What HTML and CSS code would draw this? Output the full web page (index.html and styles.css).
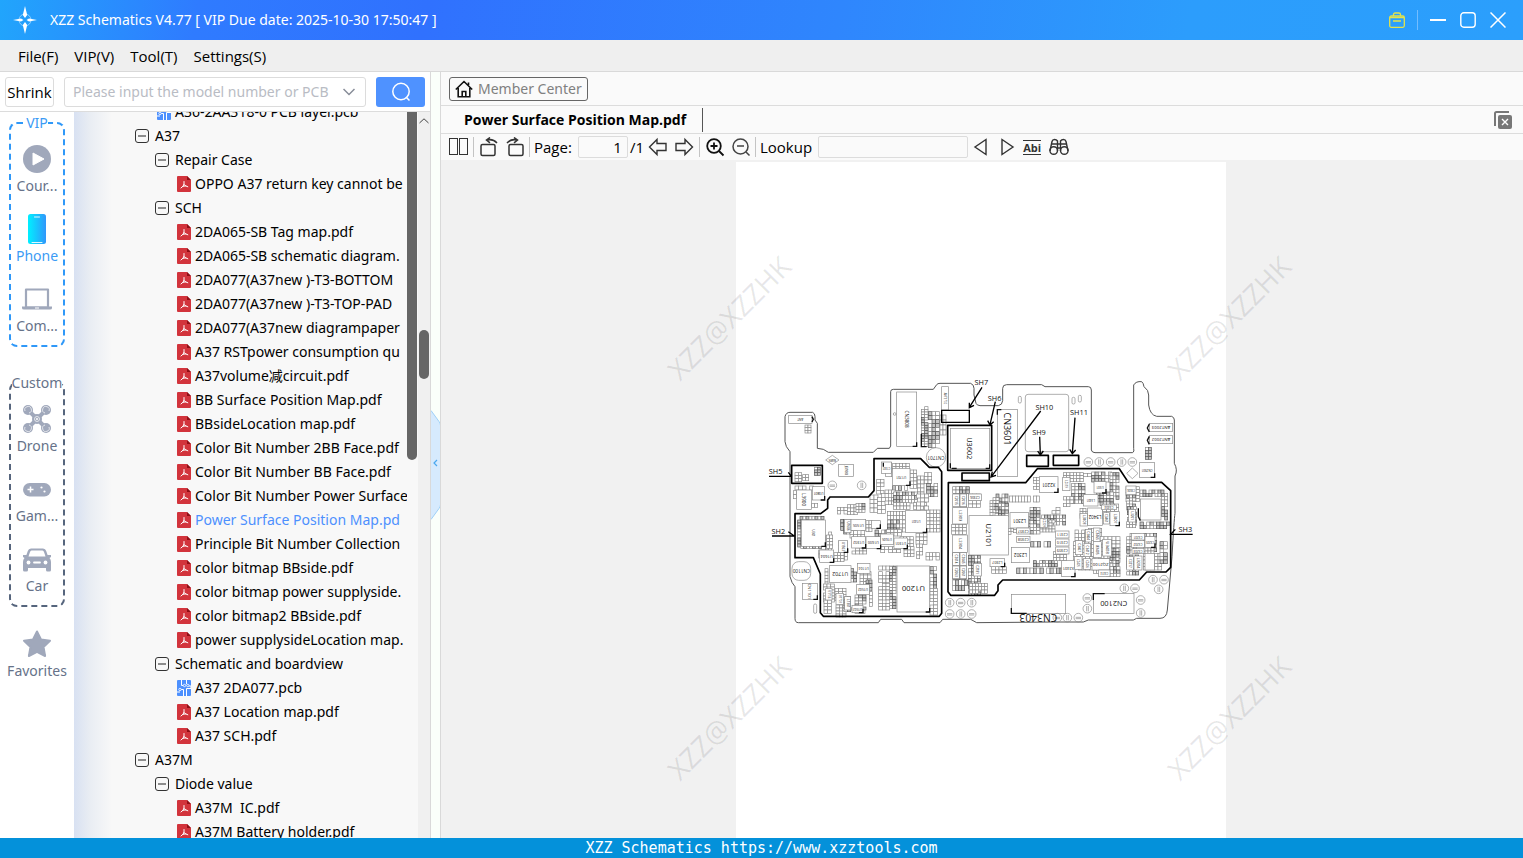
FILE: index.html
```html
<!DOCTYPE html>
<html lang="en">
<head>
<meta charset="utf-8">
<title>XZZ Schematics V4.77</title>
<link rel="stylesheet" href="styles.css">
</head>
<body>
<svg class="defs" aria-hidden="true">
  <symbol id="pdf" viewBox="0 0 14 16">
    <path d="M1 0h9l4 4v11a1 1 0 0 1-1 1H1a1 1 0 0 1-1-1V1a1 1 0 0 1 1-1z" fill="#d2343c"/>
    <path d="M10 0l4 4h-4z" fill="#8f0f16"/>
    <path d="M7 5.500v2.500Q7 10 4 12M7 8.500q.5 1.500 3.800 2.300M5.800 10.400l3-.6" fill="none" stroke="#fff" stroke-linecap="round"/>
  </symbol>
  <symbol id="pcb" viewBox="0 0 14 16">
    <rect width="14" height="16" rx="1" fill="#4d90fe"/>
    <path d="M4.500 0v5.500h2M6.500 16V9.500h-3M9.500 0v4M9.500 16V8.500h4.500V6h-2.500M0 12h3" fill="none" stroke="#fff"/>
    <circle cx="7.500" cy="5.500" r="1.200" fill="#4d90fe" stroke="#fff" stroke-width=".8"/><circle cx="3" cy="9.500" r="1.200" fill="#4d90fe" stroke="#fff" stroke-width=".8"/><circle cx="10.800" cy="5.500" r="1.200" fill="#4d90fe" stroke="#fff" stroke-width=".8"/>
  </symbol>
  <symbol id="minus" viewBox="0 0 14 14">
    <rect x=".5" y=".5" width="13" height="13" rx="2.500" fill="none" stroke="#333"/><path d="M3 7h8" stroke="#222"/>
  </symbol>
</svg>

<header class="titlebar">
  <svg class="logo" viewBox="0 0 24 28"><g fill="none" stroke="#8fd0ff"><circle cx="12" cy="14" r="6"/></g><path d="M12 0l2.200 9L12 12 9.800 9zM12 28l2.200-9L12 16l-2.200 3zM0 14l8-1.600L10.500 14 8 15.600zM24 14l-8-1.600L13.500 14l2.500 1.600z" fill="#fff"/></svg>
  <h1>XZZ Schematics V4.77 [ VIP Due date: 2025-10-30 17:50:47 ]</h1>
  <div class="window-tools">
    <button aria-label="Toolbox"><svg viewBox="0 0 16 16" fill="none" stroke="#e3e34b" stroke-width="1.300"><rect x=".7" y="4" width="14.600" height="11.300" rx="1.500"/><path d="M4.500 4V2.500a1.500 1.500 0 0 1 1.500-1.500h4a1.500 1.500 0 0 1 1.500 1.500V4M1 5.500h14M4 9h8"/></svg></button>
    <span class="rule"></span>
    <button aria-label="Minimize"><svg viewBox="0 0 16 16" stroke="#fff" stroke-width="2"><path d="M0 8h16"/></svg></button>
    <button aria-label="Maximize"><svg viewBox="0 0 16 16" fill="none" stroke="#fff" stroke-width="1.400"><rect x=".8" y=".8" width="14.400" height="14.400" rx="3"/></svg></button>
    <button aria-label="Close"><svg viewBox="0 0 16 16" stroke="#fff" stroke-width="1.500"><path d="M.5.5l15 15M15.500.5l-15 15"/></svg></button>
  </div>
</header>

<nav class="menubar">
  <button>File(F)</button><button>VIP(V)</button><button>Tool(T)</button><button>Settings(S)</button>
</nav>

<main class="workspace">
  <section class="browser">
    <form class="search">
      <button type="button" class="shrink">Shrink</button>
      <div class="model">
        <input type="text" aria-label="Model number" placeholder="Please input the model number or PCB">
        <svg viewBox="0 0 12 8" fill="none" stroke="#888d99" stroke-width="1.500"><path d="M.5 1l5.500 5.500L11.500 1"/></svg>
      </div>
      <button type="button" class="go" aria-label="Search"><svg viewBox="0 0 20 20" fill="none" stroke="#fff" stroke-width="1.500"><circle cx="10" cy="9.500" r="8.200"/><path d="M15 15l3.500 3.500"/></svg></button>
    </form>
    <div class="library">
      <aside class="categories">
        <fieldset class="group vip">
          <legend>VIP</legend>
          <button class="cat"><svg viewBox="0 0 30 30"><circle cx="15" cy="15" r="14" fill="#a0a8bb"/><path d="M11 9v12l11-6z" fill="#fff" stroke="#fff" stroke-linejoin="round"/></svg>Cour...</button>
          <button class="cat current"><svg viewBox="0 0 30 30"><defs><linearGradient id="phone"><stop stop-color="#00f0ff"/><stop offset="1" stop-color="#3097fb"/></linearGradient></defs><rect x="6" y="0" width="18" height="30" rx="2.500" fill="url(#phone)"/><path d="M12.500 3h5M10 28.500h10" stroke="#dff8ff" stroke-linecap="round"/></svg>Phone</button>
          <button class="cat"><svg viewBox="0 0 30 30"><path d="M4 5.500h22v18H4z" fill="none" stroke="#a0a8bb" stroke-width="2.200" stroke-linejoin="round"/><path d="M0 22.500h30v1.500q0 1.500-2 1.500H2q-2 0-2-1.500z" fill="#a0a8bb"/><path d="M13 24h4" stroke="#fff"/></svg>Com...</button>
        </fieldset>
        <fieldset class="group custom">
          <legend>Custom</legend>
          <button class="cat"><svg viewBox="0 0 30 30"><path d="M6 6l9 9 9-9M6 24l9-9 9 9" fill="none" stroke="#a0a8bb" stroke-width="4"/><g fill="#a0a8bb"><circle cx="6" cy="6" r="5"/><circle cx="24" cy="6" r="5"/><circle cx="6" cy="24" r="5"/><circle cx="24" cy="24" r="5"/><circle cx="15" cy="15" r="5"/></g><g fill="none" stroke="#fff" stroke-width=".7"><path d="M3 7a3.300 3.300 0 1 1 4 2M27 7a3.300 3.300 0 1 0-4 2M3 23a3.300 3.300 0 1 0 4-2M27 23a3.300 3.300 0 1 1-4-2"/><circle cx="15" cy="15" r="2.500"/></g><circle cx="15" cy="15" r="1" fill="#fff"/></svg>Drone</button>
          <button class="cat"><svg viewBox="0 0 30 30"><rect x="1" y="9" width="28" height="13.500" rx="6.700" fill="#a0a8bb"/><path d="M8.500 12.500v6M5.500 15.500h6" stroke="#fff" stroke-width="1.500"/><circle cx="19.500" cy="13.500" r="1.100" fill="#fff"/><circle cx="22.500" cy="17.500" r="1.100" fill="#fff"/></svg>Gam...</button>
          <button class="cat"><svg viewBox="0 0 30 30"><path d="M9 4.500h12q2.500 0 3.200 2.500l1.400 4 3.400 0v2l-1.500 1q1.500 1.500 1.500 4V26q0 1.500-1.500 1.500h-2q-1.500 0-1.500-1.500v-2H6v2q0 1.500-1.500 1.500h-2Q1 27.500 1 26v-8q0-2.500 1.500-4L1 13v-2h3.400l1.400-4Q6.500 4.500 9 4.500z" fill="#a0a8bb"/><path d="M9.500 6.500h11q1 0 1.500 1.500l1.500 4.500h-17L8 8q.5-1.500 1.500-1.500z" fill="#fff"/><circle cx="6.500" cy="18.500" r="1.900" fill="#fff"/><circle cx="23.500" cy="18.500" r="1.900" fill="#fff"/><path d="M12 18.500h6" stroke="#fff" stroke-width="1.800" stroke-linecap="round"/></svg>Car</button>
        </fieldset>
        <button class="cat favorites"><svg viewBox="0 0 30 30"><path d="M15 2.500l4 8 9 1.300-6.500 6.200 1.600 9L15 22.800 6.900 27l1.600-9L2 11.800l9-1.300z" fill="#a0a8bb" stroke="#a0a8bb" stroke-width="2" stroke-linejoin="round"/></svg>Favorites</button>
      </aside>
      <div class="tree-pane">
        <ul class="tree">
          <li class="l2 leaf"><svg><use href="#pcb"/></svg>A36-2AA318-0 PCB layer.pcb</li>
          <li class="l1"><svg><use href="#minus"/></svg>A37</li>
          <li class="l2"><svg><use href="#minus"/></svg>Repair Case</li>
          <li class="l3 leaf"><svg><use href="#pdf"/></svg>OPPO A37 return key cannot be</li>
          <li class="l2"><svg><use href="#minus"/></svg>SCH</li>
          <li class="l3 leaf"><svg><use href="#pdf"/></svg>2DA065-SB Tag map.pdf</li>
          <li class="l3 leaf"><svg><use href="#pdf"/></svg>2DA065-SB schematic diagram.</li>
          <li class="l3 leaf"><svg><use href="#pdf"/></svg>2DA077(A37new )-T3-BOTTOM</li>
          <li class="l3 leaf"><svg><use href="#pdf"/></svg>2DA077(A37new )-T3-TOP-PAD</li>
          <li class="l3 leaf"><svg><use href="#pdf"/></svg>2DA077(A37new diagrampaper</li>
          <li class="l3 leaf"><svg><use href="#pdf"/></svg>A37 RSTpower consumption qu</li>
          <li class="l3 leaf"><svg><use href="#pdf"/></svg>A37volume减circuit.pdf</li>
          <li class="l3 leaf"><svg><use href="#pdf"/></svg>BB Surface Position Map.pdf</li>
          <li class="l3 leaf"><svg><use href="#pdf"/></svg>BBsideLocation map.pdf</li>
          <li class="l3 leaf"><svg><use href="#pdf"/></svg>Color Bit Number 2BB Face.pdf</li>
          <li class="l3 leaf"><svg><use href="#pdf"/></svg>Color Bit Number BB Face.pdf</li>
          <li class="l3 leaf"><svg><use href="#pdf"/></svg>Color Bit Number Power Surface</li>
          <li class="l3 leaf selected"><svg><use href="#pdf"/></svg>Power Surface Position Map.pd</li>
          <li class="l3 leaf"><svg><use href="#pdf"/></svg>Principle Bit Number Collection</li>
          <li class="l3 leaf"><svg><use href="#pdf"/></svg>color bitmap BBside.pdf</li>
          <li class="l3 leaf"><svg><use href="#pdf"/></svg>color bitmap power supplyside.</li>
          <li class="l3 leaf"><svg><use href="#pdf"/></svg>color bitmap2 BBside.pdf</li>
          <li class="l3 leaf"><svg><use href="#pdf"/></svg>power supplysideLocation map.</li>
          <li class="l2"><svg><use href="#minus"/></svg>Schematic and boardview</li>
          <li class="l3 leaf"><svg><use href="#pcb"/></svg>A37 2DA077.pcb</li>
          <li class="l3 leaf"><svg><use href="#pdf"/></svg>A37 Location map.pdf</li>
          <li class="l3 leaf"><svg><use href="#pdf"/></svg>A37 SCH.pdf</li>
          <li class="l1"><svg><use href="#minus"/></svg>A37M</li>
          <li class="l2"><svg><use href="#minus"/></svg>Diode value</li>
          <li class="l3 leaf"><svg><use href="#pdf"/></svg>A37M&nbsp; IC.pdf</li>
          <li class="l3 leaf"><svg><use href="#pdf"/></svg>A37M Battery holder.pdf</li>
        </ul>
        <div class="inner-scroll"><span></span></div>
        <div class="outer-scroll"><svg viewBox="0 0 10 6" fill="none" stroke="#444"><path d="M.5 5L5 .8 9.500 5"/></svg><span></span></div>
      </div>
    </div>
  </section>

  <div class="splitter"><button aria-label="Collapse panel"><svg viewBox="0 0 10 110"><path d="M0 .5l8 11q1.500 2 1.500 4v79q0 2-1.500 4l-8 11" fill="#d6eafd" stroke="#9fd0f7"/><path d="M6 50L3 53l3 3" fill="none" stroke="#4aa8ef" stroke-width="1.200"/></svg></button></div>

  <section class="document">
    <div class="memberbar">
      <button><svg viewBox="0 0 18 18" fill="none" stroke="#111" stroke-width="1.600"><path d="M.8 9.500L9 1.500l8.200 8M3.200 8v8.700h11.600V8M7.200 16.500v-5h3.600v5M13.500 5V2.500"/></svg>Member Center</button>
    </div>
    <div class="tabs">
      <button class="tab">Power Surface Position Map.pdf</button>
      <button class="close-all" aria-label="Close all tabs"><svg viewBox="0 0 18 18"><path d="M1 15V2.500Q1 1 2.500 1H15" fill="none" stroke="#777" stroke-width="2"/><rect x="4" y="4" width="14" height="14" rx="2" fill="#777"/><path d="M8 8l6 6M14 8l-6 6" stroke="#fff" stroke-width="1.400"/></svg></button>
    </div>
    <div class="toolbar">
      <button aria-label="Two pages"><svg viewBox="0 0 20 20" fill="none" stroke="#333"><rect x="1.500" y="1.500" width="8" height="16"/><rect x="11.500" y="1.500" width="8" height="16"/></svg></button>
      <span class="sep"></span>
      <button aria-label="Rotate left"><svg viewBox="0 0 20 20" fill="none" stroke="#333" stroke-width="1.500"><rect x="2" y="7.500" width="14" height="11" rx="1.500"/><path d="M18 6Q14 1.500 8 3M11 .5L7.500 3l3.500 2.800"/></svg></button>
      <button class="after" aria-label="Rotate right"><svg viewBox="0 0 20 20" fill="none" stroke="#333" stroke-width="1.500"><rect x="4" y="7.500" width="14" height="11" rx="1.500"/><path d="M2 6Q6 1.500 12 3M9 .5L12.500 3 9 5.800"/></svg></button>
      <span class="sep tight"></span>
      <label for="page">Page:</label>
      <input id="page" class="page-no" type="text" value="1">
      <span class="total">/1</span>
      <button aria-label="Previous page"><svg viewBox="0 0 20 20" fill="none" stroke="#333" stroke-width="1.400"><path d="M1.500 10L9 2.500V6.500h9v7H9v4z"/></svg></button>
      <button class="after" aria-label="Next page"><svg viewBox="0 0 20 20" fill="none" stroke="#333" stroke-width="1.400"><path d="M18.500 10L11 2.500V6.500H2v7h9v4z"/></svg></button>
      <span class="sep"></span>
      <button aria-label="Zoom in"><svg viewBox="0 0 20 20" fill="none" stroke="#111" stroke-width="1.800"><circle cx="9" cy="9" r="6.800"/><path d="M14 14l4.500 4.500M9 5.500v7M5.500 9h7"/></svg></button>
      <button class="after" aria-label="Zoom out"><svg viewBox="0 0 20 20" fill="none" stroke="#444" stroke-width="1.500"><circle cx="9.500" cy="9.500" r="7.500"/><path d="M15 15l3.500 3.500M6 9h7"/></svg></button>
      <span class="sep tight"></span>
      <label for="lookup">Lookup</label>
      <input id="lookup" class="lookup" type="text">
      <button aria-label="Find previous"><svg viewBox="0 0 20 20" fill="none" stroke="#333" stroke-width="1.400"><path d="M15 2.500v15L4 10z"/></svg></button>
      <button class="after" aria-label="Find next"><svg viewBox="0 0 20 20" fill="none" stroke="#333" stroke-width="1.400"><path d="M5 2.500v15L16 10z"/></svg></button>
      <button class="abi after">Abi</button>
      <button class="after" aria-label="Find in files"><svg viewBox="0 0 20 20" fill="none" stroke="#333" stroke-width="1.400"><path d="M1 14L3 4.500Q3.500 2.500 5.500 2.500T8.500 4v10M19 14l-2-9.500Q16.500 2.500 14.500 2.500T11.500 4v10M8.500 7h3M8.500 11h3"/><circle cx="4.700" cy="13.500" r="3.800"/><circle cx="15.300" cy="13.500" r="3.800"/><path d="M2.500 7h6M11.500 7h6"/></svg></button>
    </div>
    <div class="viewer">
      <svg class="sheet" id="sheet" viewBox="-72 -624 1470 2028" preserveAspectRatio="xMidYMin slice">
        <g class="outline">
          <path d="M75 140Q78 127 90 127H158Q165 130 165 140V150L172 160V235L190 238L205 247H340L352 235H388L392 228V65Q392 58 400 58H520L530 44Q533 40 540 40H632Q642 44 642 55V75L648 100Q650 106 660 107H715Q727 105 728 92V55Q728 44 740 44H845L855 50H985Q994 50 994 60V240Q996 248 1005 248H1118Q1124 244 1121 236V45Q1128 33 1145 35Q1150 38 1152 50Q1166 60 1166 75V105Q1170 135 1190 139H1235Q1243 142 1243 150V280Q1254 300 1245 318V430Q1242 450 1236 560L1222 720Q1220 745 1200 745H1130L1120 750H985L970 756H880L650 758L632 748H548L540 758H432L425 748H362L355 758H115Q105 758 105 745V650Q95 640 90 620V245Q76 230 75 215Z"/>
        </g>
        <g class="shield">
          <path d="M342 266H482L508 292H535L545 305V730L538 739H190L181 728V612L160 563H105V431H182L203 415V390L210 381H325L342 362Z"/>
          <path d="M565 338H797L832 296H1078L1105 337H1205L1232 362V592L1218 606H1160L1138 630H728L714 645V662L704 676H572L564 665Z"/>
          <path d="M563 166H695V301H563ZM606 309H688V332H606ZM95 286H187V340H95ZM800 256H865V289H800ZM880 256H956V286H880Z"/>
        </g>
        <g class="leader">
          <path d="M545 121H628V157H545ZM27 319H94M85 307L95 320M36 498H104M85 485L104 499M666 52L628 112M628 98V113L642 106M706 95L690 164M683 152L690 165L701 155M842 123L694 320M697 305L693 321L708 316M839 200L841 254M833 243L841 255L850 243M945 143L937 250M929 238L937 251L947 240M1298 493H1232L1246 478"/>
        </g>
      </svg>
      <svg class="watermark" aria-hidden="true">
        <text transform="translate(239 222) rotate(-45)">XZZ@XZZHK</text>
        <text transform="translate(739 222) rotate(-45)">XZZ@XZZHK</text>
        <text transform="translate(239 622) rotate(-45)">XZZ@XZZHK</text>
        <text transform="translate(739 622) rotate(-45)">XZZ@XZZHK</text>
      </svg>
    </div>
  </section>
</main>
<footer class="statusbar">XZZ Schematics https://www.xzztools.com</footer>
<script src="board.js"></script>
</body>
</html>
```
FILE: styles.css
```css
* { box-sizing: border-box; }
body {
  margin: 0;
  height: 100vh;
  display: flex;
  flex-direction: column;
  overflow: hidden;
  font: 14px/20px "Noto Sans", "Noto Sans CJK SC", sans-serif;
  color: #000;
  background: #f0f0f0;
}
button, input { font: inherit; color: inherit; }
button { padding: 0; border: 0; background: none; white-space: nowrap; }
svg { display: block; flex: none; }
.defs { position: absolute; width: 0; height: 0; }

.titlebar {
  display: flex;
  align-items: center;
  height: 40px;
  padding: 0 17px 0 13px;
  flex: none;
  color: #fff;
  background: linear-gradient(100deg, #21a5fc 0, #2f7bff 13%, #3071fe 28%, #2f86fd 55%, #2c9dfc 78%, #2b9ffc 100%);
}
.logo { width: 24px; height: 28px; }
.titlebar h1 { margin: 0 auto 0 13px; font-size: 14px; font-weight: 400; }
.window-tools { display: flex; align-items: center; gap: 14px; }
.window-tools svg { width: 16px; height: 16px; }
.rule { width: 1px; height: 20px; margin: 0 -2px; background: #73bdff; }

.menubar {
  display: flex;
  flex: none;
  gap: 16px;
  height: 32px;
  padding: 0 18px;
  border-bottom: 1px solid #d9d9d9;
  background: #efefef;
}
.menubar, .shrink, .toolbar { font-family: "Open Sans", sans-serif; font-size: 15px; }

.workspace { display: flex; flex: 1; min-height: 0; }
.browser { display: flex; flex-direction: column; width: 431px; flex: none; border-right: 1px solid #d9d9d9; background: #fff; }
.search { display: flex; align-items: center; flex: none; height: 40px; padding: 0 5px; border-bottom: 1px solid #dcdcdc; }
.shrink { width: 49px; height: 30px; border: 1px solid #dcdcdc; border-radius: 3px; background: #fff; }
.model { display: flex; align-items: center; flex: 1; height: 30px; margin: 0 10px; padding: 0 10px 0 8px; border: 1px solid #dcdcdc; border-radius: 3px; }
.model input { flex: 1; min-width: 0; padding: 0; border: 0; outline: 0; background: none; }
.model input::placeholder { color: #b9bcc4; }
.model svg { width: 12px; height: 8px; margin-left: 4px; }
.go { display: grid; place-items: center; width: 49px; height: 30px; border-radius: 3px; background: #4f92ff; }
.go svg { width: 20px; height: 20px; }

.library { display: flex; flex: 1; min-height: 0; }
.categories { display: flex; flex-direction: column; align-items: center; width: 74px; flex: none; overflow: hidden; padding-top: 1px; color: #667289; }
.group { width: 56px; min-width: 0; margin: 0 0 26px; padding: 0 0 2px; border: 2px dashed #56657d; border-radius: 8px; }
.group legend { margin: 0 auto; padding: 0; line-height: 20px; }
.group.vip { border-color: #2f98f8; }
.vip legend { color: #3b9bf5; }
.cat { display: flex; flex-direction: column; align-items: center; gap: 2px; width: 100%; height: 70px; padding-top: 11px; line-height: 20px; }
.cat svg { width: 30px; height: 30px; }
.cat.current { color: #3b9bf5; }
.favorites { margin-top: -15px; }

.tree-pane { display: flex; flex: 1; min-width: 0; background: linear-gradient(90deg, #d8e1f2 0, #e9edf3 16px, #f8f8f8 38px); }
.tree { flex: 1; min-width: 0; margin: -12px 0 0; padding: 0; list-style: none; overflow: hidden; clip-path: inset(12px 0 0 0); }
.tree li { display: flex; align-items: center; gap: 6px; height: 24px; white-space: pre; }
.tree svg { width: 14px; height: 14px; }
.tree .leaf { gap: 4px; }
.tree .leaf svg { height: 16px; }
.l1 { padding-left: 61px; }
.l2 { padding-left: 81px; }
.l2.leaf { padding-left: 83px; }
.l3.leaf { padding-left: 103px; }
.selected { color: #4d90fe; }
.inner-scroll { width: 11px; flex: none; }
.inner-scroll span { display: block; width: 10px; height: 48%; border-radius: 0 0 5px 5px; background: #666; }
.outer-scroll { display: flex; flex-direction: column; align-items: center; width: 12px; flex: none; padding-top: 6px; background: #f0f0f0; }
.outer-scroll svg { width: 10px; height: 6px; }
.outer-scroll span { width: 10px; height: 49px; margin-top: 206px; border-radius: 5px; background: #666; }

.splitter { display: flex; align-items: center; width: 9px; flex: none; background: #fafffa; }
.splitter svg { width: 10px; height: 110px; margin-top: 20px; }

.document { display: flex; flex-direction: column; flex: 1; min-width: 0; border-left: 1px solid #d9d9d9; background: #fafafa; }
.memberbar { display: flex; align-items: center; flex: none; height: 34px; padding-left: 8px; border-bottom: 1px solid #dcdcdc; }
.memberbar button { display: flex; align-items: center; gap: 5px; height: 24px; padding: 0 5px; border: 1px solid #666; border-radius: 3px; color: #808080; }
.memberbar svg { width: 18px; height: 18px; }
.tabs { display: flex; align-items: center; justify-content: space-between; flex: none; height: 28px; padding-right: 11px; border-bottom: 1px solid #dcdcdc; }
.tab { height: 24px; padding: 0 16px 0 23px; border-right: 1px solid #555; font-family: "Open Sans", sans-serif; font-weight: 700; }
.close-all svg { width: 18px; height: 18px; }
.toolbar { display: flex; align-items: center; flex: none; height: 26px; padding-left: 7px; }
.toolbar svg { width: 20px; height: 20px; }
.toolbar .after { margin-left: 6px; }
.sep { width: 1px; height: 20px; margin: 0 5px; background: #c4c4c4; }
.sep.tight { margin: 0 4px; }
.toolbar input { height: 22px; border: 1px solid #dcdcdc; border-radius: 2px; background: #fafafa; }
.page-no { width: 50px; margin: 0 2px 0 6px; padding: 0 5px; text-align: right; }
.total { margin-right: 4px; }
.lookup { width: 150px; margin: 0 3px 0 6px; padding: 0 4px; }
.toolbar .abi { width: 18px; margin-right: 2px; height: 15px; border: solid #333; border-width: 1px 0; font-size: 11px; font-weight: 700; line-height: 13px; color: #333; }

.viewer { position: relative; display: flex; justify-content: center; flex: 1; min-height: 0; padding: 2px 2px 0 0; overflow: hidden; background: #f1f1f1; }
.sheet { width: 490px; background: #fff; font-family: "Open Sans", sans-serif; }
.outline { fill: none; stroke: #555; stroke-width: 3; }
.shield { fill: none; stroke: #000; stroke-width: 5; stroke-linejoin: round; }
.leader { fill: none; stroke: #000; stroke-width: 4; }
.cells, .chips { fill: #fff; stroke: #888; stroke-width: 2; }
.cells .dense { fill: #c4c4c4; stroke: #555; }
.pads { fill: none; stroke: #888; stroke-width: 2; }
.marks { fill: #111; text-anchor: middle; }
.corners { fill: none; stroke: #111; stroke-width: 4; }
.watermark { position: absolute; left: 0; top: 0; width: 100%; height: 100%; fill: rgba(0, 0, 0, .09); font-size: 28px; pointer-events: none; }

.statusbar { flex: none; height: 20px; text-align: center; color: #fff; background: #0491da; font: 15px/20px "DejaVu Sans Mono", monospace; }
```
FILE: board.js
```js
const NS = "http://www.w3.org/2000/svg";
const sheet = document.getElementById("sheet");
const outline = sheet.firstElementChild;

function layer(name, before) {
  const g = document.createElementNS(NS, "g");
  g.setAttribute("class", name);
  sheet.insertBefore(g, before || null);
  return g;
}
function add(parent, tag, attrs, text) {
  const el = document.createElementNS(NS, tag);
  for (const k in attrs) el.setAttribute(k, attrs[k]);
  if (text) el.textContent = text;
  parent.appendChild(el);
}

const cells = layer("cells", outline.nextSibling);
const chips = layer("chips", cells.nextSibling);
const pads = layer("pads", chips.nextSibling);
const corners = layer("corners");
const marks = layer("marks");

// Arrays of small parts: x, y, columns, rows, cell width, cell height, dense
const arrays = [
  [484,110,2,15,10,8,1],[505,125,3,9,11,12,1],[540,135,2,4,9,15,0],[105,308,2,3,10,9,0],[128,314,2,2,9,9,0],[163,292,2,3,9,8,1],
  [135,165,2,3,9,8,0],[105,348,5,1,11,12,0],[100,362,1,2,9,12,0],[155,400,3,1,9,12,0],
  [120,439,8,1,9,9,1],[113,450,1,9,9,9,1],[122,526,8,1,9,9,1],[197,486,2,5,9,11,1],
  [232,412,3,2,10,10,0],[262,404,3,3,10,10,0],[288,400,3,3,9,9,1],[350,328,2,4,11,11,0],[377,278,1,3,18,14,0],[398,280,5,2,10,10,0],[398,347,5,1,9,14,1],[450,300,2,5,10,11,0],[472,318,2,5,10,12,0],[493,308,2,3,11,11,0],[500,340,3,4,11,10,1],
  [330,375,2,4,12,13,0],[352,370,2,5,12,12,0],[375,360,3,4,10,11,0],[400,366,8,3,9,11,1],[400,398,10,2,10,10,0],[382,424,6,2,9,12,0],[382,450,6,3,9,12,1],[500,420,4,6,10,11,0],[470,372,3,4,12,12,0],
  [242,448,3,4,9,11,1],[270,482,4,2,11,11,0],[318,452,2,3,9,11,0],[345,480,4,2,10,10,1],[380,478,4,2,11,10,0],[276,534,4,2,11,9,0],[362,530,5,2,12,9,0],[235,515,3,5,9,11,0],[200,495,2,4,9,10,0],[420,500,4,3,10,10,0],[432,530,3,3,10,10,0],[468,490,3,3,11,11,0],[470,522,2,4,9,11,0],[498,548,4,2,10,11,0],
  [176,540,2,2,9,12,1],[222,548,3,3,10,9,0],[272,596,2,4,9,10,1],[300,605,3,4,11,10,0],[195,586,1,6,9,10,0],[190,642,3,6,11,9,0],[192,690,2,4,11,10,0],[225,655,3,4,11,9,0],[228,705,3,4,10,9,0],[252,680,2,5,10,9,1],[285,675,3,5,11,9,1],[275,712,4,2,10,9,0],[318,630,2,3,9,11,1],[328,665,1,4,9,11,0],
  [356,588,5,1,11,12,0],[356,605,3,3,11,11,0],[388,590,2,14,10,9,1],[356,640,3,8,11,10,0],[510,590,2,6,10,11,1],[510,655,2,8,11,10,0],
  [578,350,6,2,10,10,1],[580,372,2,4,20,10,1],[625,372,3,4,12,10,0],[575,463,4,3,11,10,0],[578,548,2,8,20,10,1],[625,556,4,12,9,10,1],[578,630,5,2,9,16,1],[628,640,6,3,9,10,0],[708,372,4,5,9,12,1],[748,378,10,1,9,18,0],[690,383,3,6,9,9,0],
  [705,400,4,4,10,10,1],[720,475,4,2,11,9,0],[695,590,4,2,11,10,0],[768,440,6,3,9,10,1],[810,412,3,8,10,10,1],[845,435,8,3,9,10,1],[812,515,6,1,10,16,1],[760,468,4,2,9,10,0],[840,450,5,4,9,9,0],[770,594,14,1,10,17,1],[820,572,8,2,9,9,1],[880,545,4,3,10,9,0],[876,412,2,2,12,10,0],
  [820,322,2,4,9,9,0],[910,308,6,3,10,9,0],[935,340,4,6,10,10,1],[970,310,5,1,12,10,0],[995,306,6,3,10,10,1],[1050,308,3,8,9,10,1],[910,380,3,3,10,10,0],[1010,366,5,4,10,10,1],[960,415,3,3,9,10,0],
  [1028,402,4,4,12,11,0],[945,480,4,4,10,11,0],[940,515,3,5,11,11,0],[975,475,5,8,10,12,0],[1020,500,5,7,12,11,0],[1050,535,3,7,9,9,1],[1040,590,4,3,10,10,1],[955,560,4,4,11,10,0],[1000,590,3,2,9,10,0],
  [1098,350,4,5,10,9,0],[1100,375,3,5,9,9,1],[1102,410,3,7,9,8,1],[1140,360,8,2,9,10,1],[1205,370,2,8,9,10,1],[1140,456,9,2,10,10,1],[1100,455,3,2,9,9,0],[1100,490,4,6,10,10,1],[1150,490,4,5,10,11,1],[1100,555,4,6,9,10,1],[1150,550,5,5,11,10,0],[1200,515,2,6,11,11,1],[1156,232,2,4,9,9,1],[1155,525,3,3,9,9,0],
];
arrays.forEach(([x, y, cols, rows, w, h, dense], n) => {
  for (let r = 0; r < rows; r++) for (let c = 0; c < cols; c++) {
    const k = (n * 31 + r * 17 + c * 23 + r * c * 7) % 13;
    if (k === 0) continue;
    add(cells, "rect", { x: x + c * w, y: y + r * h, width: w, height: h, class: dense && k % 2 ? "dense" : "plain" });
  }
});

// Larger packages: x, y, width, height, corner flag, label, size, rotation
const parts = [
  [410,66,60,163,1,"CN3808",14,90],[545,50,20,70,0,"ANT3702",8,90],[86,136,70,24,0,"ANT",9,180],[571,175,118,120,1,"U3602",22,90],[712,118,60,202,0,"",9,0],
  [236,283,44,36,0,"J3900",11,90],[110,360,44,58,0,"L3900",14,90],[157,350,37,40,1,"U3801",10,180],[124,450,72,79,1,"U301",9,90],[364,276,30,34,0,"C1301",8,180],[397,295,53,51,1,"U1701",10,180],[436,422,64,65,1,"U1401",9,180],
  [253,448,20,40,0,"U1606",9,90],[273,448,44,33,0,"U1505",11,180],[334,452,27,23,1,"",8,0],[275,500,42,34,1,"U1302",11,180],[318,500,44,36,1,"U1600",11,180],[362,492,38,32,0,"U1605",10,180],[402,504,40,32,1,"U1301",11,180],[235,512,28,35,1,"U1503",9,90],[179,540,42,37,1,"U1604",12,180],
  [208,587,65,50,0,"U1702",16,180],[292,580,38,30,0,"U1104",10,180],[290,643,38,30,0,"U1502",10,180],[411,588,98,138,1,"U1200",23,180],[127,640,45,48,1,"CN1101",13,90],[228,670,22,33,0,"U1703",8,90],[196,656,20,34,0,"U1706",8,90],[276,706,33,22,1,"U1502",9,180],[254,680,18,40,0,"L1301",9,90],
  [578,412,44,50,0,"L2303",12,90],[578,495,44,52,0,"L2304",12,90],[626,372,38,20,0,"C2306",10,180],[578,372,20,38,0,"C2015",9,90],[600,372,20,38,0,"C2016",9,90],[578,548,20,38,0,"C2014",9,90],[600,548,20,38,0,"C2045",9,90],[578,588,20,38,0,"C2063",9,90],[600,588,20,38,0,"C2061",9,90],[640,580,24,38,0,"C2181",9,90],
  [627,437,118,118,0,"U2101",24,90],[750,428,56,46,0,"L2301",14,180],[754,532,54,46,0,"L2302",14,180],[690,566,44,24,1,"L2307",11,180],[770,474,40,18,0,"C2307",11,180],[770,499,40,18,0,"C2308",11,180],[838,320,56,47,1,"X2201",14,180],[908,322,22,40,0,"L2019",8,90],[840,445,22,28,0,"C2309",8,90],
  [887,483,40,21,0,"C2311",11,180],[887,507,40,21,0,"C2310",11,180],[887,531,40,21,0,"C2309",11,180],[905,572,40,48,1,"X2401",12,180],[1002,335,36,34,1,"U301",9,180],[970,374,44,34,0,"L3401",9,180],[983,414,44,52,0,"L3402",14,180],[960,430,22,38,0,"L3403",10,90],[1030,428,18,34,0,"C3461",9,90],[1050,425,28,42,1,"L3407",10,90],[1025,405,44,14,0,"C3404",9,180],[976,478,18,38,0,"C3404",9,90],[1000,474,20,42,0,"C3465",10,90],[946,512,22,42,0,"C3407",9,90],[972,520,20,40,0,"C3412",9,90],[1000,515,24,48,0,"U3405",10,90],[1028,508,26,50,0,"U3408",12,90],[944,560,22,38,0,"C2405",8,90],[970,566,22,32,0,"C2406",8,90],[996,566,52,34,0,"ZQ2100",13,180],[1016,600,34,20,0,"C3414",8,180],
  [1141,387,62,63,0,"",9,0],[1098,348,30,26,0,"C3606",8,180],[1106,418,20,38,0,"L3201",9,90],[1138,278,46,44,1,"CN2901",9,180],[1114,490,40,20,0,"C3201",9,180],[1114,512,40,20,0,"C3202",9,180],[1116,536,36,14,0,"C3203",9,180],[1155,500,30,32,1,"C3209",8,180],[1100,560,20,40,0,"C3217",9,90],[1122,558,24,42,0,"L3204",12,90],[1155,550,28,50,0,"",8,0],
  [1168,160,70,24,0,"ANT2003",13,180],[1168,197,70,24,0,"ANT2002",13,180],[1000,670,122,60,0,"CN2100",22,180],[754,673,163,57,0,"",9,0],
];
parts.forEach(([x, y, w, h, flag, text, size, rot]) => {
  add(chips, "rect", { x, y, width: w, height: h });
  if (flag) add(corners, "path", { d: `M${x + w - 12} ${y + h}H${x + w}V${y + h - 12}` });
  if (text) {
    const cx = x + w / 2, cy = y + h / 2;
    add(marks, "text", { x: cx, y: cy + size * 0.35, "font-size": size, transform: `rotate(${rot} ${cx} ${cy})` }, text);
  }
});

add(pads, "rect", { x: 796, y: 73, width: 130, height: 172, rx: 8 });
[[775,79],[936,82],[955,76]].forEach(([x, y]) => add(pads, "rect", { x, y, width: 9, height: 20, rx: 4 }));
add(pads, "rect", { x: 161, y: 702, width: 9, height: 28, rx: 4 });
add(pads, "path", { d: "M197 270L217 256L237 270L217 284ZM1100 310L1117 294L1134 310L1117 326Z" });
add(pads, "circle", { cx: 528, cy: 262, r: 29 });
add(pads, "circle", { cx: 404, cy: 132, r: 4 });
add(pads, "rect", { x: 96, y: 575, width: 56, height: 56, rx: 20 });

// Round test points
[[217,346],[305,346],[985,276],[1018,276],[1052,276],[1085,276],[1117,276],[569,698],[602,698],[635,698],[569,732],[602,732],[635,732],
 [1093,655],[1125,655],[1179,629],[1212,629],[1196,658],[982,684],[982,716],[1142,690],[1142,729],[892,743],[922,743],[955,743]]
  .forEach(([cx, cy], i) => {
    add(pads, "circle", { cx, cy, r: 13 });
    add(pads, "path", { d: i % 2 ? `M${cx - 2} ${cy - 8}v16M${cx + 3} ${cy - 8}v16` : `M${cx - 8} ${cy - 1}h16M${cx - 8} ${cy + 3}h16` });
  });

add(corners, "path", { d: "M712 134V119H724M1000 690V671H1034M754 714V730H800M1168 162L1162 174L1168 186M1168 199L1162 211L1168 223M156 140L160 148L156 156M575 295H590M571 280V295M370 290V278M484 192V230H500M1135 415V440L1141 452" });

// Callouts and free labels: x, y, text, size, rotation
[[664,46,"SH7",22,0],[704,92,"SH6",22,0],[853,119,"SH10",22,0],[957,135,"SH11",22,0],[837,196,"SH9",22,0],[47,313,"SH5",22,0],[55,492,"SH2",22,0],[1276,487,"SH3",22,0],
 [733,177,"CN3601",27,90],[835,733,"CN3403",31,180],[528,258,"CN1701",14,180],[124,598,"CN1100",14,180],[217,266,"MARK",8,180]]
  .forEach(([x, y, t, s, r]) => add(marks, "text", { x, y, "font-size": s, transform: `rotate(${r} ${x} ${y})` }, t));
```
